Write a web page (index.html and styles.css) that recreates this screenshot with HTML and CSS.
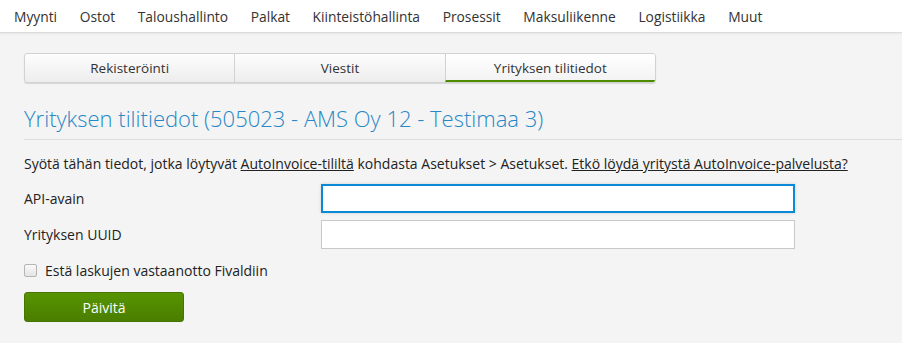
FILE: index.html
```html
<!DOCTYPE html>
<html lang="fi">
<head>
    <meta charset="UTF-8">
    <title>Yrityksen tilitiedot</title>
    <link rel="stylesheet" href="styles.css">
</head>
<body>
    <nav class="top-menu">
        <a href="#">Myynti</a>
        <a href="#">Ostot</a>
        <a href="#">Taloushallinto</a>
        <a href="#">Palkat</a>
        <a href="#">Kiinteistöhallinta</a>
        <a href="#">Prosessit</a>
        <a href="#">Maksuliikenne</a>
        <a href="#">Logistiikka</a>
        <a href="#">Muut</a>
    </nav>
    <main class="content">
        <div class="tabs">
            <a href="#" class="tab">Rekisteröinti</a>
            <a href="#" class="tab">Viestit</a>
            <a href="#" class="tab tab-active">Yrityksen tilitiedot</a>
        </div>
        <h1 class="page-title">Yrityksen tilitiedot (505023 - AMS Oy 12 - Testimaa 3)</h1>
        <p class="intro">
            Syötä tähän tiedot, jotka löytyvät <a href="#">AutoInvoice-tililtä</a> kohdasta Asetukset &gt; Asetukset.
            <a href="#">Etkö löydä yritystä AutoInvoice-palvelusta?</a>
        </p>
        <form class="account-form">
            <div class="form-row">
                <label for="api-key">API-avain</label>
                <input type="text" id="api-key" class="field field-focus">
            </div>
            <div class="form-row">
                <label for="uuid">Yrityksen UUID</label>
                <input type="text" id="uuid" class="field">
            </div>
            <label class="check-row">
                <span class="checkbox"></span>
                Estä laskujen vastaanotto Fivaldiin
            </label>
            <button type="button" class="btn-update">Päivitä</button>
        </form>
    </main>
</body>
</html>
```

FILE: styles.css
```css
body {
    margin: 0;
    font-family: 'Open Sans', 'Noto Sans', sans-serif;
    font-size: 14px;
    color: #333;
    background: #f4f4f4;
}
a {
    color: inherit;
}
.top-menu {
    height: 32px;
    background: white;
    display: flex;
    align-items: center;
    gap: 22.6px;
    padding-left: 14px;
    border-bottom: 1px solid #dcdcdc;
    box-shadow: 0 1px 2px rgba(0,0,0,0.06);
}
.top-menu a {
    text-decoration: none;
    color: #333;
    font-size: 13.8px;
}
.content {
    padding: 20px 0 0 24px;
}
.tabs {
    display: flex;
    width: 630px;
    height: 28px;
    border: 1px solid #d2d2d2;
    border-radius: 3px;
    box-shadow: 0 1px 1px rgba(0,0,0,0.12);
    background: linear-gradient(#fdfdfd, #ededed);
    overflow: hidden;
}
.tab {
    flex: 1;
    display: flex;
    align-items: center;
    justify-content: center;
    text-decoration: none;
    color: #333;
    font-size: 13.5px;
    border-left: 1px solid #d2d2d2;
}
.tab:first-child {
    border-left: none;
}
.tab-active {
    background: linear-gradient(#ffffff, #f3f3f3);
    border-bottom: 2px solid #4e8a00;
    padding-top: 2px;
}
.page-title {
    margin: 20px 0 0;
    padding-bottom: 6px;
    font-size: 22px;
    font-weight: 300;
    color: #2787c7;
    border-bottom: 1px solid #dcdcdc;
}
.intro {
    margin: 14px 0 0;
    font-size: 14px;
    line-height: 20px;
    color: #222;
}
.account-form {
    margin-top: 10px;
}
.form-row {
    display: flex;
    align-items: center;
    margin-bottom: 7px;
}
.form-row label {
    width: 297px;
    font-size: 14px;
    color: #222;
}
.field {
    width: 474px;
    height: 29px;
    box-sizing: border-box;
    border: 1px solid #c8c8c8;
    background: white;
    font-family: inherit;
    font-size: 14px;
    padding: 0 8px;
    outline: none;
}
.field-focus {
    border: 2px solid #0a8ad6;
    box-shadow: 0 0 3px rgba(0,0,0,0.15);
}
.check-row {
    display: flex;
    align-items: center;
    gap: 8px;
    margin-top: 12px;
    font-size: 14px;
    color: #222;
}
.checkbox {
    width: 11px;
    height: 11px;
    border: 1px solid #b5b5b5;
    border-radius: 2px;
    background: linear-gradient(#fafafa, #e4e4e4);
}
.btn-update {
    display: block;
    margin-top: 12px;
    width: 160px;
    height: 30px;
    border: 1px solid #467500;
    border-radius: 3px;
    background: linear-gradient(#579400, #4a7e00);
    color: white;
    font-family: inherit;
    font-size: 14px;
}
```
